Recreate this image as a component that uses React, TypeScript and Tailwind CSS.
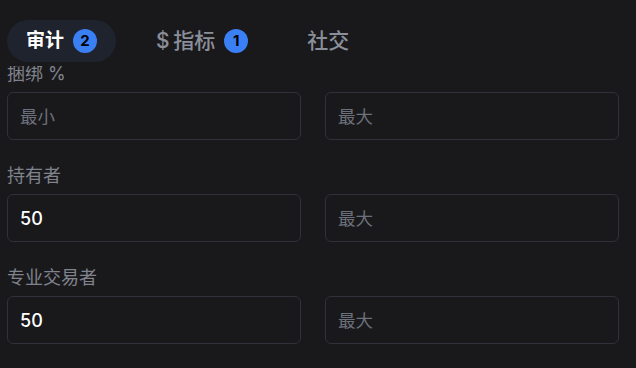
import { useState } from 'react';

const font = { fontFamily: '"Inter", "Noto Sans CJK SC", sans-serif' };

type Tab = { key: string; label: string; count?: number };

const tabs: Tab[] = [
  { key: 'audit', label: '审计', count: 2 },
  { key: 'metrics', label: '$\u2009指标', count: 1 },
  { key: 'social', label: '社交' },
];

const rows = [
  { label: '捆绑 %', min: '', max: '' },
  { label: '持有者', min: '50', max: '' },
  { label: '专业交易者', min: '50', max: '' },
];

function RangeInput({ value, placeholder }: { value: string; placeholder: string }) {
  return (
    <input
      defaultValue={value}
      placeholder={placeholder}
      className="h-12 w-full rounded-md border border-[#2f323a] bg-[#19191c] px-3 text-[18px] font-medium text-white outline-none placeholder:font-normal placeholder:text-[17.5px] placeholder:text-[#6c707a]"
    />
  );
}

export default function App() {
  const [active, setActive] = useState('audit');

  return (
    <div className="h-[368px] w-[636px] overflow-hidden bg-[#19191c]" style={font}>
      <div className="relative z-10 flex h-[66px] items-start gap-[21px] bg-[#19191c] pl-[7px] pt-5">
        {tabs.map((t) => {
          const isActive = t.key === active;
          return (
            <button
              key={t.key}
              onClick={() => setActive(t.key)}
              className={`flex h-[42px] items-center gap-[9px] rounded-full px-[19px] ${
                isActive ? 'bg-[#1f232d] text-[19px] font-bold text-white' : 'text-[21px] font-medium text-[#8b8f99]'
              }`}
            >
              <span>{t.label}</span>
              {t.count !== undefined && (
                <span className="flex h-6 w-6 items-center justify-center rounded-full bg-[#3b7ff5] text-[15px] font-bold text-black">
                  {t.count}
                </span>
              )}
            </button>
          );
        })}
      </div>

      <div className="-mt-[4px] flex flex-col gap-[24px] pl-[7px] pr-[17px]">
        {rows.map((r) => (
          <div key={r.label} className="flex flex-col gap-2">
            <div className="h-[22px] text-[18px] leading-[24px] text-[#80838c]">{r.label}</div>
            <div className="grid grid-cols-2 gap-6">
              <RangeInput value={r.min} placeholder="最小" />
              <RangeInput value={r.max} placeholder="最大" />
            </div>
          </div>
        ))}
      </div>
    </div>
  );
}
